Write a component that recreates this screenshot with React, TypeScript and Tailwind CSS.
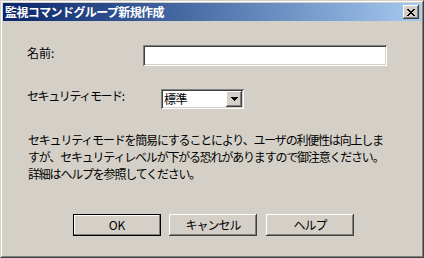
import React from "react";

const raised =
  "shadow-[inset_-1px_-1px_#404040,inset_1px_1px_#ffffff,inset_-2px_-2px_#808080,inset_2px_2px_#d4d0c8]";
const sunken =
  "shadow-[inset_1px_1px_#808080,inset_-1px_-1px_#ffffff,inset_2px_2px_#404040,inset_-2px_-2px_#d4d0c8]";

function CloseGlyph() {
  const rows = [
    "xx....xx",
    ".xx..xx.",
    "..xxxx..",
    "...xx...",
    "..xxxx..",
    ".xx..xx.",
    "xx....xx",
  ];
  const rects: React.ReactNode[] = [];
  rows.forEach((r, y) =>
    r.split("").forEach((c, x) => {
      if (c === "x") rects.push(<rect key={`${x}-${y}`} x={x} y={y} width={1} height={1} fill="#000" />);
    })
  );
  return (
    <svg width="8" height="7" viewBox="0 0 8 7" shapeRendering="crispEdges">
      {rects}
    </svg>
  );
}

function DownArrow() {
  return (
    <svg width="7" height="4" viewBox="0 0 7 4" shapeRendering="crispEdges">
      <rect x="0" y="0" width="7" height="1" fill="#000" />
      <rect x="1" y="1" width="5" height="1" fill="#000" />
      <rect x="2" y="2" width="3" height="1" fill="#000" />
      <rect x="3" y="3" width="1" height="1" fill="#000" />
    </svg>
  );
}

export default function App() {
  return (
    <div className="w-[424px] h-[258px] bg-[#d4d0c8] border border-t-[#d4d0c8] border-l-[#d4d0c8] border-r-[#404040] border-b-[#404040] font-['Noto_Sans_CJK_JP',sans-serif] text-black text-[12px]">
      <div className="h-full border border-t-white border-l-white border-r-[#808080] border-b-[#808080] p-px flex flex-col">
        {/* Title bar */}
        <div className="h-[18px] bg-gradient-to-r from-[#0a246a] to-[#a6caf0] flex items-center justify-between pl-[2px] pr-[2px]">
          <span className="text-white font-bold text-[12px] leading-[14px] tracking-[-0.6px] whitespace-nowrap">
            監視コマンドグループ新規作成
          </span>
          <div className={`w-[16px] h-[14px] bg-[#d4d0c8] flex items-center justify-center ${raised}`}>
            <CloseGlyph />
          </div>
        </div>

        {/* Body */}
        <div className="flex-1 flex flex-col pl-[24px]">
          {/* Name row */}
          <div className="flex items-start mt-[24px]">
            <div className="w-[116px] mt-[1px] leading-[14px] whitespace-nowrap">名前:</div>
            <div className={`w-[244px] h-[21px] bg-white ${sunken}`} />
          </div>

          {/* Security mode row */}
          <div className="flex items-start mt-[23px]">
            <div className="w-[134px] mt-[0px] leading-[14px] tracking-[-1.4px] whitespace-nowrap">
              セキュリティモード:
            </div>
            <div className={`w-[83px] h-[20px] bg-white p-[2px] flex ${sunken}`}>
              <div className="flex-1 pl-[1px] leading-[16px] tracking-[-0.5px]">標準</div>
              <div className={`w-[16px] h-[16px] bg-[#d4d0c8] flex items-center justify-center ${raised}`}>
                <DownArrow />
              </div>
            </div>
          </div>

          {/* Description */}
          <div className="mt-[22px] ml-[1px] leading-[17px] tracking-[-1.2px] whitespace-nowrap">
            セキュリティモードを簡易にすることにより、ユーザの利便性は向上しま
            <br />
            すが、セキュリティレベルが下がる恐れがありますので御注意ください。
            <br />
            詳細はヘルプを参照してください。
          </div>

          {/* Buttons */}
          <div className="flex mt-[32px] pl-[46px] gap-[8px]">
            <div className="w-[88px] h-[22px] border border-black">
              <div className="w-full h-full bg-[#d4d0c8] flex items-center justify-center shadow-[inset_-1px_-1px_#808080,inset_1px_1px_#ffffff] leading-[14px]">
                OK
              </div>
            </div>
            <div className={`w-[88px] h-[22px] bg-[#d4d0c8] flex items-center justify-center leading-[14px] tracking-[-1px] ${raised}`}>
              キャンセル
            </div>
            <div className={`w-[88px] h-[22px] ml-[1px] bg-[#d4d0c8] flex items-center justify-center leading-[14px] tracking-[-1px] ${raised}`}>
              ヘルプ
            </div>
          </div>
        </div>
      </div>
    </div>
  );
}
